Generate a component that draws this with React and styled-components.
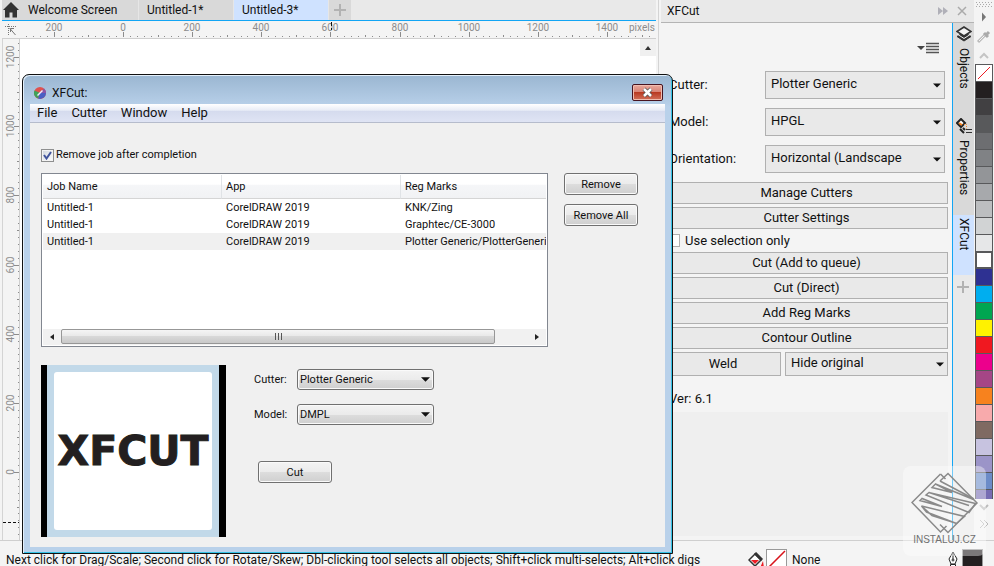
import React from "react";
import styled, { createGlobalStyle } from "styled-components";

const tabs = [
  { name: "Welcome Screen", width: 119 },
  { name: "Untitled-1*", width: 95 },
  { name: "Untitled-3*", width: 95, active: true },
];

const jobs = [
  { name: "Untitled-1", app: "CorelDRAW 2019", marks: "KNK/Zing" },
  { name: "Untitled-1", app: "CorelDRAW 2019", marks: "Graphtec/CE-3000" },
  {
    name: "Untitled-1",
    app: "CorelDRAW 2019",
    marks: "Plotter Generic/PlotterGeneri",
    selected: true,
  },
];

const swatches = [
  "#231f20", "#414042", "#58595b", "#6d6e71", "#808285", "#939598",
  "#a7a9ac", "#bcbec0", "#d1d3d4", "#e6e7e8", "#ffffff", "#2e3192",
  "#00aeef", "#00a651", "#fff200", "#f01820", "#ec008c", "#a54686",
  "#f7821e", "#f8aaac", "#7f6a62", "#c7c3e0", "#9b94c8", "#6c8cc8",
  "#776db3",
];

const STEP = 6.915;

function makeTicks(from, to) {
  const ticks = [];
  for (let i = from; i <= to; i++) {
    const size = i % 10 === 0 ? 5 : i % 5 === 0 ? 2 : 1;
    ticks.push({ i, size, label: i % 10 === 0 ? Math.abs(i * 20) : null });
  }
  return ticks;
}

function TopRuler() {
  return (
    <TopRulerStyle>
      {makeTicks(-14, 76).map(({ i, size, label }) => {
        const x = Math.round(103 + i * STEP);
        return (
          <g key={i}>
            <rect x={x} y={16 - size} width="1" height={size} />
            {label !== null && (
              <text x={x} y="10" textAnchor="middle">
                {label}
              </text>
            )}
          </g>
        );
      })}
      <text x="609" y="10">
        pixels
      </text>
      <path d="M311.5 1v4M311.5 7v2" stroke="#111" />
    </TopRulerStyle>
  );
}

function SideRuler() {
  return (
    <SideRulerStyle>
      {makeTicks(-9, 62).map(({ i, size, label }) => {
        const y = Math.round(433 - i * STEP);
        return (
          <g key={i}>
            <rect x={16 - size} y={y} width={size} height="1" />
            {label !== null && (
              <text transform={`translate(11 ${y}) rotate(-90)`} textAnchor="middle">
                {label}
              </text>
            )}
          </g>
        );
      })}
      <path d="M0 483.5h18" stroke="#111" strokeDasharray="3 2" />
    </SideRulerStyle>
  );
}

function Caret({ size = 10 }) {
  return (
    <CaretIcon width={size} height="5" viewBox="0 0 10 5">
      <path d="M0 0h10L5 5z" fill="#111" />
    </CaretIcon>
  );
}

function Combo({ id, value, label, docked }) {
  return (
    <ComboStyle $docked={docked}>
      <select id={id} defaultValue={value} aria-label={label}>
        <option>{value}</option>
      </select>
      <Caret size={docked ? 8 : 9} />
    </ComboStyle>
  );
}

function Workspace() {
  return (
    <WorkspaceStyle>
      <TabStrip>
        <HomeButton aria-label="Home">
          <svg width="16" height="16" viewBox="0 0 16 16" fill="#333">
            <path d="M8 0l8 8h-2v7.500h-4.500v-5h-3v5H2V8H0z" />
          </svg>
        </HomeButton>
        {tabs.map((tab) => (
          <DocTab key={tab.name} $width={tab.width} $active={tab.active}>
            {tab.name}
          </DocTab>
        ))}
        <AddTab aria-label="New document">
          <svg width="12" height="12" viewBox="0 0 12 12">
            <path d="M6 0v12M0 6h12" stroke="#b2b2b2" strokeWidth="2" />
          </svg>
        </AddTab>
      </TabStrip>
      <RulerRow>
        <RulerCorner>
          <svg width="12" height="12" viewBox="0 0 12 12" stroke="#777" fill="none">
            <path d="M3.500 0v12M0 2.500h12" strokeDasharray="1 1" />
            <path d="M4.500 4l6 7M5.500 8V4.500H9" />
          </svg>
        </RulerCorner>
        <TopRuler />
      </RulerRow>
      <CanvasRow>
        <SideRuler />
        <Canvas>
          <ScrollUp aria-label="Scroll up">
            <svg width="6" height="4" viewBox="0 0 6 4">
              <path d="M3 0l3 4H0z" fill="#333" />
            </svg>
          </ScrollUp>
        </Canvas>
      </CanvasRow>
    </WorkspaceStyle>
  );
}

function Docker() {
  return (
    <DockerStyle>
      <DockerHeader>
        <span>XFCut</span>
        <svg width="30" height="10" viewBox="0 0 30 10" fill="#b0b0b8">
          <path d="M0 1l5 4-5 4zM5 1l5 4-5 4z" />
          <path d="M20 1l8 8M28 1l-8 8" stroke="#aaa" strokeWidth="1.500" />
        </svg>
      </DockerHeader>
      <DockerMain>
        <DockerBody>
          <DockerMenu aria-label="Docker options">
            <svg width="22" height="12" viewBox="0 0 22 12">
              <path d="M0 4h8L4 8z" fill="#444" />
              <path d="M9 1.500h13M9 4.500h13M9 7.500h13M9 10.500h13" stroke="#555" strokeWidth="1.500" />
            </svg>
          </DockerMenu>
          <Settings>
            <label htmlFor="dock-cutter">Cutter:</label>
            <Combo docked id="dock-cutter" value="Plotter Generic" />
            <label htmlFor="dock-model">Model:</label>
            <Combo docked id="dock-model" value="HPGL" />
            <label htmlFor="dock-orientation">Orientation:</label>
            <Combo docked id="dock-orientation" value="Horizontal (Landscape" />
          </Settings>
          <Actions>
            <DockButton>Manage Cutters</DockButton>
            <DockButton>Cutter Settings</DockButton>
            <SelectionOnly>
              <input type="checkbox" />
              Use selection only
            </SelectionOnly>
            <DockButton>Cut (Add to queue)</DockButton>
            <DockButton>Cut (Direct)</DockButton>
            <DockButton>Add Reg Marks</DockButton>
            <DockButton>Contour Outline</DockButton>
            <WeldRow>
              <DockButton>Weld</DockButton>
              <Combo docked label="After weld" value="Hide original" />
            </WeldRow>
          </Actions>
          <Version>Ver: 6.1</Version>
          <Filler />
        </DockerBody>
        <Rail>
          <RailTab $height={92}>
            <svg width="16" height="16" viewBox="0 0 16 16" stroke="#333">
              <path d="M1 10.500l7 4.500 7-4.500-7-4.500z" fill="#333" />
              <path d="M1 8l7 4.500L15 8" fill="none" stroke="#eee" />
              <path d="M1 5.500L8 1l7 4.500L8 10z" fill="#f4f4f4" strokeWidth="1.500" />
            </svg>
            Objects
          </RailTab>
          <RailTab $height={100}>
            <svg width="16" height="16" viewBox="0 0 16 16" fill="none">
              <path d="M1 5l4-4 4 4-4 4z" fill="#fff" stroke="#222" strokeWidth="2" />
              <path d="M3 5l3 2" stroke="#f58220" strokeWidth="2" />
              <path d="M8 6.500h2.500v4" stroke="#f58220" strokeDasharray="1 1" />
              <path d="M4 11l4 4M7 10l2 2" stroke="#222" strokeWidth="2" />
              <path d="M10 11.500h6M10 14.500h6" stroke="#333" />
            </svg>
            Properties
          </RailTab>
          <RailTab $height={60} $active>
            XFCut
          </RailTab>
          <AddDocker aria-label="Add docker">
            <svg width="12" height="12" viewBox="0 0 12 12">
              <path d="M6 0v12M0 6h12" stroke="#b2b2b2" strokeWidth="2" />
            </svg>
          </AddDocker>
        </Rail>
      </DockerMain>
    </DockerStyle>
  );
}

function Palette() {
  return (
    <PaletteStyle>
      <svg width="18" height="64" viewBox="0 0 18 64" fill="none">
        <path d="M1 2.500h16M1 6.500h16" stroke="#aaa" strokeDasharray="1 2" />
        <path d="M2 4.500h15" stroke="#aaa" strokeDasharray="1 2" />
        <path d="M7 12.500l4 4.500-4 4.500z" fill="#777" />
        <path d="M3 42l7-7" stroke="#bbb" strokeWidth="3" />
        <path d="M4 41l6-6" stroke="#f4f4f4" />
        <path d="M9 33l4 4M11 35l3-3" stroke="#aaa" strokeWidth="3" />
        <path d="M5 58l4-4 4 4" stroke="#c4c4c4" strokeWidth="2" />
      </svg>
      <Swatches>
        <Swatch aria-label="No color" $color="#fff">
          <svg width="16" height="16" viewBox="0 0 16 16">
            <path d="M2 14L14 2" stroke="#ed1c24" />
          </svg>
        </Swatch>
        {swatches.map((color) => (
          <Swatch
            key={color}
            aria-label={color}
            $color={color}
            $outlined={color === "#ffffff"}
          />
        ))}
      </Swatches>
      <svg width="18" height="41" viewBox="0 0 18 41" fill="none" stroke="#bbb">
        <path d="M5 6l4 4 4-4" strokeWidth="2" />
        <path d="M5 21l4 4-4 4M9 21l4 4-4 4" />
      </svg>
    </PaletteStyle>
  );
}

function StatusBar() {
  return (
    <StatusBarStyle>
      <StatusHint>
        Next click for Drag/Scale; Second click for Rotate/Skew; Dbl-clicking
        tool selects all objects; Shift+click multi-selects; Alt+click digs
      </StatusHint>
      <FillInfo>
        <svg width="16" height="16" viewBox="0 0 16 16">
          <path d="M1 8l6-6 6 6-6 6z" fill="#fff" stroke="#333" strokeWidth="1.500" />
          <path d="M7 1l7 7" stroke="#333" strokeWidth="3" />
          <path d="M3 8h8l-4 4zM15 9l1 7h-4z" fill="#ed1c24" />
        </svg>
        <StatusSwatch $color="#fff">
          <svg width="19" height="19" viewBox="0 0 19 19">
            <path d="M1 18L18 1" stroke="#d8141c" strokeWidth="1.500" />
          </svg>
        </StatusSwatch>
        None
      </FillInfo>
      <OutlineInfo>
        <svg width="10" height="18" viewBox="0 0 10 18" fill="#fff" stroke="#222">
          <path d="M5 1L1 8l2 5h4l2-5zM5 1v8M2.500 13.500h5V17h-5z" />
          <circle cx="5" cy="9" r="1" />
        </svg>
        <StatusSwatch $color="#231f20" />
      </OutlineInfo>
    </StatusBarStyle>
  );
}

function JobList() {
  return (
    <JobListStyle>
      <JobTable>
        <thead>
          <tr>
            <th>Job Name</th>
            <th>App</th>
            <th>Reg Marks</th>
          </tr>
        </thead>
        <tbody>
          {jobs.map((job, index) => (
            <JobRow key={index} $selected={job.selected}>
              <td>{job.name}</td>
              <td>{job.app}</td>
              <td>{job.marks}</td>
            </JobRow>
          ))}
        </tbody>
      </JobTable>
      <ScrollBar>
        <ScrollArrow aria-label="Scroll left">
          <svg width="4" height="6" viewBox="0 0 4 6">
            <path d="M4 0v6L0 3z" fill="#222" />
          </svg>
        </ScrollArrow>
        <ScrollTrack>
          <ScrollThumb>
            <svg width="9" height="7" viewBox="0 0 9 7">
              <path d="M1.500 0v7M4.500 0v7M7.500 0v7" stroke="#555" />
            </svg>
          </ScrollThumb>
        </ScrollTrack>
        <ScrollArrow aria-label="Scroll right">
          <svg width="4" height="6" viewBox="0 0 4 6">
            <path d="M0 0v6l4-3z" fill="#222" />
          </svg>
        </ScrollArrow>
      </ScrollBar>
    </JobListStyle>
  );
}

function CutDialog() {
  return (
    <DialogStyle role="dialog" aria-label="XFCut">
      <TitleBar>
        <svg width="14" height="14" viewBox="0 0 14 14">
          <circle cx="7" cy="7" r="6" fill="#e0524e" />
          <path d="M7 7L1.500 4.500A6 6 0 0 0 5 12.600z" fill="#3fa35a" />
          <path d="M7 7l-2 5.600A6 6 0 0 0 13 7z" fill="#4a5fc4" />
          <path d="M7 7l6 0a6 6 0 0 0-2-4.500z" fill="#8b55a8" />
          <path d="M4.500 9.500l5-5" stroke="#eef" strokeWidth="1.500" />
        </svg>
        <span>XFCut:</span>
        <CloseButton aria-label="Close">
          <svg width="13" height="11" viewBox="0 0 13 11">
            <path d="M3 2l7 7M10 2L3 9" stroke="#555" strokeWidth="4" />
            <path d="M3 2l7 7M10 2L3 9" stroke="#fff" strokeWidth="2.500" />
          </svg>
        </CloseButton>
      </TitleBar>
      <MenuBar>
        <button>File</button>
        <button>Cutter</button>
        <button>Window</button>
        <button>Help</button>
      </MenuBar>
      <DialogBody>
        <RemoveAfter>
          <CheckBox>
            <input type="checkbox" defaultChecked />
            <svg width="9" height="9" viewBox="0 0 9 9">
              <path d="M1 4l2.500 3.500L8 1" fill="none" stroke="#41549c" strokeWidth="2" />
            </svg>
          </CheckBox>
          Remove job after completion
        </RemoveAfter>
        <ListRow>
          <JobList />
          <ListButtons>
            <WinButton>Remove</WinButton>
            <WinButton>Remove All</WinButton>
          </ListButtons>
        </ListRow>
        <JobDetail>
          <Preview>
            <PreviewPage>XFCUT</PreviewPage>
          </Preview>
          <CutForm>
            <FormRow>
              <label htmlFor="job-cutter">Cutter:</label>
              <Combo id="job-cutter" value="Plotter Generic" />
            </FormRow>
            <FormRow>
              <label htmlFor="job-model">Model:</label>
              <Combo id="job-model" value="DMPL" />
            </FormRow>
            <WinButton>Cut</WinButton>
          </CutForm>
        </JobDetail>
      </DialogBody>
    </DialogStyle>
  );
}

function Watermark() {
  return (
    <WatermarkStyle>
      <svg width="68" height="62" viewBox="0 0 68 62" fill="none" stroke="#8a8a8a" strokeWidth="1.500">
        <path d="M29.500 2L1 30.500 29.500 60l6-6" />
        <path d="M29.500 2l5 5M29 9l8-7.500 29 29.500-29 29.500-8-8" />
        <path d="M29 9l34 18M24.500 12l-3.500 3.500 20 5zM24.500 12l38 15.500" />
        <path d="M18 20.500l-3 2.500 43 17.500 6.500-9zM18 20.500l40 13" />
        <path d="M11 26.500l-2 2 22 6zM10.500 34l43 10.500-8 7-24.500-8zM10.500 34l5 6 30 11.500" />
      </svg>
      INSTALUJ.CZ
    </WatermarkStyle>
  );
}

function App() {
  return (
    <Page>
      <GlobalStyle />
      <Main>
        <Workspace />
        <Docker />
        <Palette />
      </Main>
      <StatusBar />
      <CutDialog />
      <Watermark />
    </Page>
  );
}

const GlobalStyle = createGlobalStyle`
  * {
    box-sizing: border-box;
  }

  body {
    margin: 0;
    overflow: hidden;
  }

  body, button, select, input {
    font-family: Roboto, "Noto Sans", sans-serif;
    font-size: 12px;
    line-height: 16px;
    color: #111;
  }

  button {
    padding: 0;
    border: 0;
    background: none;
  }

  svg {
    display: block;
    flex: none;
  }
`;

const Page = styled.div`
  position: relative;
  display: flex;
  flex-direction: column;
  height: 100vh;
  overflow: hidden;
  background: #f4f4f4;
`;

const Main = styled.div`
  display: flex;
  flex: 1;
  min-height: 0;
`;

const WorkspaceStyle = styled.div`
  display: flex;
  flex-direction: column;
  flex: 1;
  min-width: 0;
  margin-right: 2px;
  padding: 0 2px 0 2px;
  border-right: 1px solid #d4d4d4;
`;

const TabStrip = styled.div`
  display: flex;
  height: 21px;
  border-bottom: 1px solid #12a5f4;
  background: #e9e9e9;
`;

const HomeButton = styled.button`
  width: 18px;
  padding-left: 1px;
  background: #d9d9d9;
`;

const DocTab = styled.button`
  width: ${(props) => props.$width}px;
  padding: 0 8px;
  border-right: 1px solid #e6e6e6;
  background: ${(props) => (props.$active ? "#cfe2ff" : "#d9d9d9")};
  text-align: left;
`;

const AddTab = styled.button`
  display: grid;
  place-items: center;
  width: 22px;
  background: #d9d9d9;
`;

const RulerRow = styled.div`
  display: flex;
  height: 18px;
  border-bottom: 1px solid #cfcfcf;
`;

const RulerCorner = styled.div`
  display: grid;
  place-items: center;
  width: 18px;
`;

const TopRulerStyle = styled.svg`
  flex: 1;
  min-width: 0;
  height: 17px;
  fill: #8c8c8c;
  font-size: 10px;
`;

const CanvasRow = styled.div`
  display: flex;
  flex: 1;
  min-height: 0;
`;

const SideRulerStyle = styled.svg`
  width: 18px;
  height: 100%;
  border-left: 1px solid #d4d4d4;
  border-right: 1px solid #cfcfcf;
  fill: #8c8c8c;
  font-size: 10px;
`;

const Canvas = styled.div`
  display: flex;
  justify-content: flex-end;
  flex: 1;
  background: #fff;
`;

const ScrollUp = styled.button`
  display: grid;
  place-items: center;
  width: 16px;
  height: 17px;
  background: #f0f0f0;
`;

const DockerStyle = styled.div`
  display: flex;
  flex-direction: column;
  width: 313px;
`;

const DockerHeader = styled.div`
  display: flex;
  align-items: center;
  justify-content: space-between;
  height: 23px;
  padding: 0 6px;
  border-bottom: 1px solid #b4b4b4;
  background: #e9e9e9;
`;

const DockerMain = styled.div`
  display: flex;
  flex: 1;
  min-height: 0;
`;

const DockerBody = styled.div`
  display: flex;
  flex-direction: column;
  flex: 1;
  padding: 19px 4px 4px;
  font-size: 13px;

  button,
  select {
    font-size: 13px;
  }
`;

const DockerMenu = styled.button`
  align-self: flex-end;
  margin-right: 9px;
`;

const Settings = styled.div`
  display: grid;
  grid-template-columns: 96px 1fr;
  grid-auto-rows: 28px;
  row-gap: 9px;
  align-items: center;
  margin: 17px 3px 9px 4px;
`;

const ComboStyle = styled.span`
  display: grid;
  align-items: center;
  height: ${(props) => (props.$docked ? "100%" : "21px")};

  select {
    grid-area: 1 / 1;
    width: 100%;
    height: 100%;
    padding: ${(props) => (props.$docked ? "0 5px 2px" : "0 2px")};
    border: 1px solid ${(props) => (props.$docked ? "#b0b0b0" : "#707070")};
    border-radius: ${(props) => (props.$docked ? 0 : "3px")};
    background: ${(props) =>
      props.$docked ? "#e9e9e9" : "linear-gradient(#f3f3f3, #ebebeb 50%, #ddd 51%, #cfcfcf)"};
    box-shadow: ${(props) => (props.$docked ? "none" : "inset 0 0 0 1px #fafafa")};
    appearance: none;
  }
`;

const CaretIcon = styled.svg`
  grid-area: 1 / 1;
  justify-self: end;
  margin-right: 4px;
  pointer-events: none;
`;

const Actions = styled.div`
  display: grid;
  gap: 3px;
`;

const DockButton = styled.button`
  height: 22px;
  border: 1px solid #b0b0b0;
  background: #e9e9e9;
`;

const SelectionOnly = styled.label`
  display: flex;
  align-items: center;
  gap: 5px;
  height: 17px;

  input {
    appearance: none;
    width: 13px;
    height: 13px;
    margin: 0 0 0 2px;
    border: 1px solid #b0b0b0;
    background: #fff;
  }
`;

const WeldRow = styled.div`
  display: grid;
  grid-template-columns: 116px 1fr;
  gap: 4px;
  height: 24px;

  > * {
    height: 100%;
  }
`;

const Version = styled.div`
  padding: 15px 4px 5px;
`;

const Filler = styled.div`
  flex: 1;
  background: #efefef;
`;

const Rail = styled.div`
  width: 22px;
  border-left: 1px solid #12a5f4;
  background: #e9e9e9;
`;

const RailTab = styled.button`
  display: flex;
  align-items: center;
  gap: 6px;
  width: 21px;
  height: ${(props) => props.$height}px;
  padding: 3px 0;
  background: ${(props) => (props.$active ? "#cfe2ff" : "#d9d9d9")};
  writing-mode: vertical-rl;
`;

const AddDocker = styled.button`
  display: grid;
  place-items: center;
  width: 20px;
  height: 24px;
`;

const PaletteStyle = styled.div`
  display: flex;
  flex-direction: column;
  align-items: center;
  width: 20px;
`;

const Swatches = styled.div`
  flex: 1;
  min-height: 0;
  width: 18px;
  overflow: hidden;
  border-top: 1px solid #58595b;
`;

const Swatch = styled.button`
  display: block;
  width: 18px;
  height: 17px;
  border: 1px solid #58595b;
  border-top: 0;
  background: ${(props) => props.$color};
  box-shadow: ${(props) => (props.$outlined ? "inset 0 0 0 1px #58595b" : "none")};
`;

const StatusBarStyle = styled.div`
  display: flex;
  align-items: center;
  height: 26px;
  padding: 12px 8px 0 6px;
  border-top: 1px solid #cfcfcf;
`;

const StatusHint = styled.div`
  flex: 1;
  white-space: nowrap;
`;

const FillInfo = styled.div`
  display: flex;
  align-items: center;
  gap: 2px;
  width: 200px;
`;

const OutlineInfo = styled.div`
  display: flex;
  align-items: center;
  gap: 4px;
`;

const StatusSwatch = styled.span`
  width: 21px;
  height: 21px;
  margin-right: 3px;
  border: 1px solid #999;
  background: ${(props) => props.$color};
`;

const DialogStyle = styled.section`
  position: absolute;
  top: 74px;
  left: 22px;
  width: 651px;
  padding: 0 6px 6px;
  border: 1px solid #111;
  border-radius: 7px 7px 0 0;
  background: linear-gradient(#9ab6d1, #b9d1ea 32px);
  box-shadow: inset 1px 1px #e4f0fb, inset -1px -1px #35c3e6;
`;

const TitleBar = styled.div`
  display: flex;
  align-items: center;
  gap: 5px;
  height: 29px;
  padding: 6px 3px 0 4px;

  span {
    flex: 1;
  }
`;

const CloseButton = styled.button`
  display: grid;
  place-items: center;
  align-self: flex-start;
  width: 31px;
  height: 17px;
  margin-top: 3px;
  border: 1px solid #471420;
  border-radius: 2px;
  background: linear-gradient(#e9a99c, #d98476 45%, #b93a22 50%, #d2705a);
  box-shadow: inset 0 0 0 1px #f0bdb0;
`;

const MenuBar = styled.nav`
  display: flex;
  gap: 14px;
  height: 19px;
  padding: 0 7px;
  margin: 0 1px;
  border-bottom: 1px solid #b6bccc;
  background: linear-gradient(#fff, #e8ecf6 35%, #d5dbee 40%, #dfe4f4);

  button {
    font-size: 13px;
  }
`;

const DialogBody = styled.div`
  padding: 25px 10px 10px 11px;
  margin: 0 1px;
  background: #f0f0f0;

  &,
  button,
  select {
    font-size: 11px;
  }
`;

const RemoveAfter = styled.label`
  display: flex;
  align-items: center;
  gap: 2px;
  height: 14px;
`;

const CheckBox = styled.span`
  display: grid;
  place-items: center;

  input {
    grid-area: 1 / 1;
    appearance: none;
    width: 13px;
    height: 13px;
    margin: 0;
    border: 1px solid #8e8f8f;
    background: linear-gradient(135deg, #cfd5dc, #fff);
    box-shadow: inset 0 0 0 1px #f4f4f4;
  }

  svg {
    grid-area: 1 / 1;
    pointer-events: none;
  }
`;

const ListRow = styled.div`
  display: flex;
  gap: 16px;
  margin-top: 11px;
`;

const JobListStyle = styled.div`
  display: flex;
  flex-direction: column;
  justify-content: space-between;
  width: 507px;
  height: 174px;
  padding: 1px;
  overflow: hidden;
  border: 1px solid #828790;
  background: #fff;
`;

const JobTable = styled.table`
  width: 100%;
  border-spacing: 0;
  table-layout: fixed;

  th,
  td {
    padding: 1px 4px 0;
    overflow: hidden;
    white-space: nowrap;
    text-align: left;
    font-weight: normal;
  }

  th {
    height: 24px;
    border-right: 1px solid #e0e3e6;
    border-bottom: 1px solid #d5d5d5;
    background: linear-gradient(#fff 40%, #f5f6f8 45%, #f1f2f4);
  }

  th:first-child,
  th:nth-child(2) {
    width: 179px;
  }

  th:last-child,
  td:last-child {
    padding-right: 0;
    border-right: 0;
  }
`;

const JobRow = styled.tr`
  height: 17px;
  background: ${(props) => (props.$selected ? "#f0f0f0" : "none")};
`;

const ScrollBar = styled.div`
  display: flex;
  height: 16px;
  background: #f1f1f1;
`;

const ScrollArrow = styled.button`
  display: grid;
  place-items: center;
  width: 18px;
`;

const ScrollTrack = styled.div`
  flex: 1;
`;

const ScrollThumb = styled.div`
  display: grid;
  place-items: center;
  width: 93%;
  height: 15px;
  border: 1px solid #979797;
  border-radius: 2px;
  background: linear-gradient(#f5f5f5, #e9e9e9 45%, #d8d8d8 50%, #c9c9c9);
`;

const ListButtons = styled.div`
  display: flex;
  flex-direction: column;
  gap: 9px;
`;

const WinButton = styled.button`
  width: 74px;
  height: 22px;
  padding-top: 1px;
  border: 1px solid #707070;
  border-radius: 3px;
  background: linear-gradient(#f3f3f3, #ebebeb 50%, #ddd 51%, #cfcfcf);
  box-shadow: inset 0 0 0 1px #fafafa;
`;

const JobDetail = styled.div`
  display: flex;
  gap: 28px;
  margin-top: 18px;
`;

const Preview = styled.div`
  width: 185px;
  height: 172px;
  padding: 7px;
  border: solid #000;
  border-width: 0 7px 0 6px;
  background: #c2d9e9;
`;

const PreviewPage = styled.div`
  display: grid;
  place-items: center;
  height: 100%;
  border-radius: 3px;
  background: #fff;
  color: #231f20;
  font: bold 41px "DejaVu Sans", sans-serif;
  -webkit-text-stroke: 1px #231f20;
`;

const CutForm = styled.div`
  display: flex;
  flex-direction: column;
  gap: 14px;
  padding-top: 4px;

  > button {
    margin: 22px 0 0 4px;
  }
`;

const FormRow = styled.div`
  display: grid;
  grid-template-columns: 43px 137px;
  align-items: center;
`;

const WatermarkStyle = styled.div`
  position: absolute;
  right: 8px;
  bottom: 10px;
  display: flex;
  flex-direction: column;
  align-items: center;
  width: 83px;
  height: 90px;
  padding-top: 6px;
  border-radius: 8px;
  background: rgba(255, 255, 255, 0.4);
  color: #707070;
  font: 10px "Liberation Sans", sans-serif;
  pointer-events: none;
`;

export default App;
